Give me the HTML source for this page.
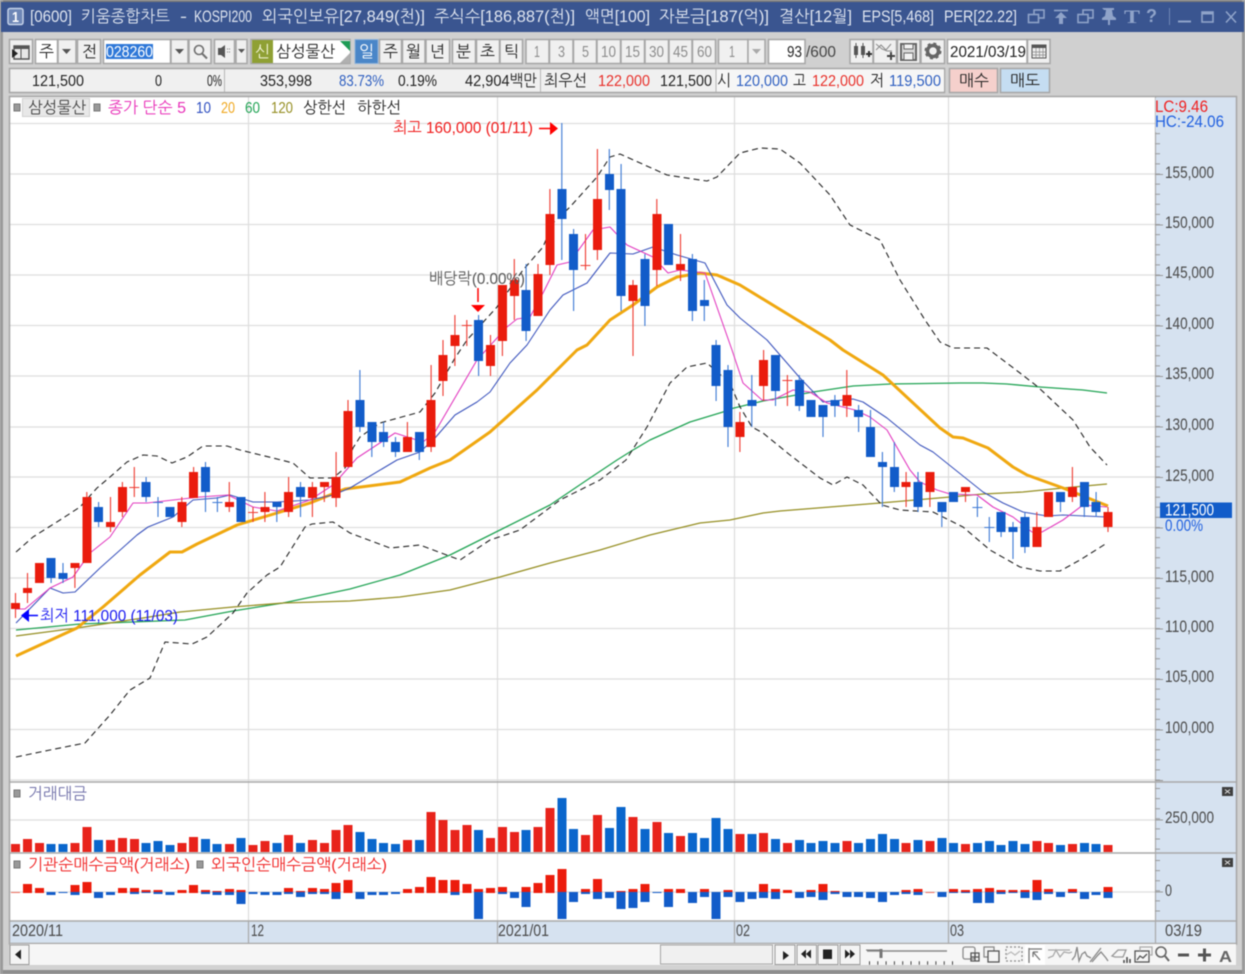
<!DOCTYPE html>
<html><head><meta charset="utf-8"><title>키움종합차트</title>
<style>
html,body{margin:0;padding:0;background:#d0d0d0;width:1245px;height:974px;overflow:hidden}
svg{display:block;filter:blur(.42px)}
text{font-family:"Liberation Sans Narrow","Liberation Sans","NanumGothic","Noto Sans CJK KR",sans-serif;font-size:16px;fill:#222;white-space:pre}
.t text{fill:#dfe5f0;font-size:16.5px}
.b{fill:#f0f0f0;stroke:#a6a6a6;stroke-width:1.5}
.w{fill:#fff;stroke:#a6a6a6;stroke-width:1.5}
.g text{fill:#8c8c8c}
.ax text{fill:#4a4a4a;font-size:16.5px}
</style></head><body>
<svg width="1245" height="974" viewBox="0 0 1245 974" xmlns="http://www.w3.org/2000/svg">
<rect width="1245" height="974" fill="#d0d0d0"/>
<rect x="0" y="0" width="1245" height="2" fill="#7d7d7d"/>
<rect x="0" y="966" width="1245" height="8" fill="#d2d2d2"/>
<rect x="0" y="970" width="1245" height="4" fill="#8e8e8e"/>
<rect x="0" y="0" width="3" height="974" fill="#9a9a9a"/>
<rect x="1242" y="0" width="3" height="974" fill="#9a9a9a"/>
<!-- title -->
<rect x="1" y="2" width="1243" height="30" fill="#3a5590"/>
<rect x="8" y="8.5" width="15" height="16" rx="2" fill="#6d86b6" stroke="#c4d2e8" stroke-width="1.5"/>
<text x="12" y="22" textLength="7" lengthAdjust="spacingAndGlyphs" style="fill:#fff;font-weight:bold;font-size:15px">1</text>
<g class="t">
<text x="30" y="22" textLength="42" lengthAdjust="spacingAndGlyphs">[0600]</text>
<text x="81" y="22" textLength="89" lengthAdjust="spacingAndGlyphs">키움종합차트</text>
<text x="180" y="22" textLength="7" lengthAdjust="spacingAndGlyphs">-</text>
<text x="194" y="22" textLength="58" lengthAdjust="spacingAndGlyphs">KOSPI200</text>
<text x="262" y="22" textLength="163" lengthAdjust="spacingAndGlyphs">외국인보유[27,849(천)]</text>
<text x="434" y="22" textLength="141" lengthAdjust="spacingAndGlyphs">주식수[186,887(천)]</text>
<text x="585" y="22" textLength="65" lengthAdjust="spacingAndGlyphs">액면[100]</text>
<text x="659" y="22" textLength="110" lengthAdjust="spacingAndGlyphs">자본금[187(억)]</text>
<text x="779" y="22" textLength="73" lengthAdjust="spacingAndGlyphs">결산[12월]</text>
<text x="862" y="22" textLength="72" lengthAdjust="spacingAndGlyphs">EPS[5,468]</text>
<text x="944" y="22" textLength="73" lengthAdjust="spacingAndGlyphs">PER[22.22]</text>
</g>
<g fill="none" stroke="#8fa3c9" stroke-width="1.6">
<rect x="1034" y="10" width="10" height="8"/><rect x="1028.5" y="14.5" width="10" height="8" fill="#3a5590"/>
<rect x="1083" y="10" width="10" height="8"/><rect x="1078" y="14.5" width="10" height="8" fill="#3a5590"/>
<path d="M1054 10.5h14"/>
<path d="M1178 21.5h13" stroke-width="2"/>
<rect x="1202" y="12" width="11" height="10"/><path d="M1202 13h11" stroke-width="3"/>
<path d="M1226 11.5l10 11M1236 11.5l-10 11" stroke="#8fa3c9"/>
<path d="M1169.5 8v17" stroke="#6f86b4" stroke-width="1"/>
</g>
<g fill="#8fa3c9">
<path d="M1061 12l6 6h-4v6h-4v-6h-4z"/>
<path d="M1103 9h12v2h-2l1 6 3 2v2h-6v5h-2v-5h-6v-2l3-2 1-6h-2z" transform="translate(-1,-1)"/>
</g>
<text x="1124" y="23" textLength="16" lengthAdjust="spacingAndGlyphs" style="fill:#8fa3c9;font-family:'Liberation Serif',serif;font-size:19px;font-weight:bold">T</text>
<text x="1146" y="22" textLength="11" lengthAdjust="spacingAndGlyphs" style="fill:#8fa3c9;font-size:18px;font-weight:bold">?</text>

<!-- toolbar 1 -->
<g>
<rect class="b" x="9.5" y="39.5" width="23" height="24"/>
<path d="M14 46h15v13H14z" fill="#e8e8e8" stroke="#555" stroke-width="1.4"/><path d="M14 46h15v3H14z" fill="#555"/><path d="M21 46v13" stroke="#555"/><path d="M12 49l6 4.5-6 4.5z" fill="#222"/>
<rect class="w" x="35.5" y="39.5" width="22" height="24"/>
<text x="39" y="57" textLength="15" lengthAdjust="spacingAndGlyphs" style="font-size:16px">주</text>
<rect class="b" x="58" y="39.5" width="18" height="24"/><path d="M62 49h9l-4.500 5z" fill="#555"/>
<rect class="b" x="77.500" y="39.5" width="23" height="24"/>
<text x="82" y="57" textLength="15" lengthAdjust="spacingAndGlyphs" style="font-size:16px">전</text>
<rect class="w" x="103.500" y="39.5" width="67" height="24"/>
<rect x="106" y="44" width="47" height="15" fill="#2f78d8"/>
<text x="106" y="57" textLength="47" lengthAdjust="spacingAndGlyphs" style="fill:#fff">028260</text>
<rect class="b" x="171" y="39.5" width="17" height="24"/><path d="M175 49h9l-4.500 5z" fill="#555"/>
<rect class="b" x="189" y="39.5" width="22" height="24"/>
<circle cx="199" cy="50" r="4.500" fill="none" stroke="#707070" stroke-width="1.6"/><path d="M202 53.500l5 5" stroke="#707070" stroke-width="2"/>
<rect class="b" x="214.500" y="39.5" width="20" height="24"/><path d="M218 48h3l4-3v13l-4-3h-3z" fill="#555"/><path d="M227 49h1M229 49h1M227 52h1M229 52h1" stroke="#777"/>
<rect class="b" x="236" y="39.5" width="11" height="24"/><path d="M238 49h7l-3.500 4z" fill="#555"/>
<rect class="b" x="251" y="39.5" width="99" height="24"/>
<rect x="252" y="40" width="21" height="23" fill="#8fa034"/>
<text x="255" y="57" textLength="15" lengthAdjust="spacingAndGlyphs" style="fill:#f2f4d8;font-size:16px">신</text>
<rect x="273" y="40.500" width="77" height="22.500" fill="#fff"/>
<text x="276" y="57" textLength="59" lengthAdjust="spacingAndGlyphs">삼성물산</text>
<path d="M340 41h10v10z" fill="#1d9c55"/><path d="M350 53v10h-10z" fill="#b0b0b0"/>
<rect x="355" y="39.5" width="23" height="24" fill="#4a86c8" stroke="#8fb2da"/>
<text x="359" y="57" textLength="15" lengthAdjust="spacingAndGlyphs" style="fill:#fff;font-size:16px">일</text>
</g>
<g>
<rect class="b" x="379.500" y="39.5" width="22" height="24"/><text x="383" y="57" textLength="15" lengthAdjust="spacingAndGlyphs" style="font-size:16px">주</text>
<rect class="b" x="402.500" y="39.5" width="22.500" height="24"/><text x="406" y="57" textLength="15" lengthAdjust="spacingAndGlyphs" style="font-size:16px">월</text>
<rect class="b" x="426" y="39.5" width="23.500" height="24"/><text x="430" y="57" textLength="15" lengthAdjust="spacingAndGlyphs" style="font-size:16px">년</text>
<rect class="b" x="452.500" y="39.5" width="23" height="24"/><text x="456" y="57" textLength="15" lengthAdjust="spacingAndGlyphs" style="font-size:16px">분</text>
<rect class="b" x="476.500" y="39.5" width="23" height="24"/><text x="480" y="57" textLength="15" lengthAdjust="spacingAndGlyphs" style="font-size:16px">초</text>
<rect class="b" x="500" y="39.5" width="22.500" height="24"/><text x="504" y="57" textLength="15" lengthAdjust="spacingAndGlyphs" style="font-size:16px">틱</text>
</g>
<g class="g">
<rect class="b" x="526" y="39.5" width="23" height="24"/><text x="534" y="57" textLength="6" lengthAdjust="spacingAndGlyphs">1</text>
<rect class="b" x="549.500" y="39.5" width="23.500" height="24"/><text x="558" y="57" textLength="7" lengthAdjust="spacingAndGlyphs">3</text>
<rect class="b" x="573.500" y="39.5" width="23" height="24"/><text x="582" y="57" textLength="7" lengthAdjust="spacingAndGlyphs">5</text>
<rect class="b" x="597" y="39.5" width="23.500" height="24"/><text x="601" y="57" textLength="15" lengthAdjust="spacingAndGlyphs">10</text>
<rect class="b" x="621" y="39.5" width="23.500" height="24"/><text x="625" y="57" textLength="15" lengthAdjust="spacingAndGlyphs">15</text>
<rect class="b" x="645" y="39.5" width="23.500" height="24"/><text x="649" y="57" textLength="15" lengthAdjust="spacingAndGlyphs">30</text>
<rect class="b" x="669" y="39.5" width="23" height="24"/><text x="673" y="57" textLength="15" lengthAdjust="spacingAndGlyphs">45</text>
<rect class="b" x="692.500" y="39.5" width="23" height="24"/><text x="697" y="57" textLength="15" lengthAdjust="spacingAndGlyphs">60</text>
<rect class="b" x="718.500" y="39.5" width="29.500" height="24"/><text x="729" y="57" textLength="6" lengthAdjust="spacingAndGlyphs">1</text>
<rect class="b" x="748" y="39.5" width="17" height="24"/><path d="M752 49h9l-4.500 5z" fill="#aaa"/>
</g>
<rect class="w" x="768.500" y="39.5" width="36.500" height="24"/>
<text x="787" y="57" textLength="15" lengthAdjust="spacingAndGlyphs">93</text>
<text x="806" y="57" textLength="30" lengthAdjust="spacingAndGlyphs" style="fill:#444">/600</text>
<rect class="b" x="850" y="39.5" width="23" height="24"/>
<path d="M854 46h4v9h-4zM861 46h4v9h-4z" fill="#555"/><path d="M856 43v15M863 43v15" stroke="#555"/><path d="M866 54h6M869 51v6" stroke="#333" stroke-width="2"/>
<rect class="b" x="873.500" y="39.5" width="23" height="24"/>
<path d="M876 50l5-5 5 5 5-6M876 44l6 5 5 2 5 0" fill="none" stroke="#8a8a8a"/><path d="M887 56h8M891 52v8" stroke="#444" stroke-width="2"/>
<rect class="b" x="897.500" y="39.5" width="22.500" height="24"/>
<path d="M901 44h15v16h-15z" fill="#d8d8d8" stroke="#666" stroke-width="2"/><path d="M904 44h9v5h-9zM904 53h9v7h-9z" fill="#f2f2f2" stroke="#666"/>
<rect class="b" x="921" y="39.5" width="23.500" height="24"/>
<circle cx="933" cy="51" r="5.500" fill="none" stroke="#666" stroke-width="3.500"/><circle cx="933" cy="51" r="7.500" fill="none" stroke="#666" stroke-width="2" stroke-dasharray="3 2.900"/>
<rect class="w" x="947.500" y="39.5" width="79.500" height="24"/>
<text x="950" y="57" textLength="76" lengthAdjust="spacingAndGlyphs">2021/03/19</text>
<rect class="b" x="1027.500" y="39.5" width="22.500" height="24"/>
<path d="M1032 45h14v13h-14z" fill="#eee" stroke="#555"/><path d="M1032 45h14v3h-14z" fill="#555"/><path d="M1032 52h14M1032 55h14M1036 48v10M1039.500 48v10M1043 48v10" stroke="#888" stroke-width=".7"/>

<!-- toolbar 2 -->
<rect class="b" x="9.500" y="68.500" width="935" height="24" style="fill:#f0f0f0"/>
<path d="M224.500 69v23M540.500 69v23M716 69v23" stroke="#b5b5b5"/>
<rect x="717" y="69.500" width="227" height="22" fill="#f6f6f6"/>
<text x="32" y="86" textLength="52" lengthAdjust="spacingAndGlyphs">121,500</text>
<text x="155" y="86" textLength="7" lengthAdjust="spacingAndGlyphs">0</text>
<text x="207" y="86" textLength="15" lengthAdjust="spacingAndGlyphs">0%</text>
<text x="260" y="86" textLength="52" lengthAdjust="spacingAndGlyphs">353,998</text>
<text x="339" y="86" textLength="45" lengthAdjust="spacingAndGlyphs" style="fill:#2f5fc0">83.73%</text>
<text x="398" y="86" textLength="39" lengthAdjust="spacingAndGlyphs">0.19%</text>
<text x="465" y="86" textLength="72" lengthAdjust="spacingAndGlyphs">42,904백만</text>
<text x="544" y="86" textLength="43" lengthAdjust="spacingAndGlyphs">최우선</text>
<text x="598" y="86" textLength="52" lengthAdjust="spacingAndGlyphs" style="fill:#e8302a">122,000</text>
<text x="660" y="86" textLength="52" lengthAdjust="spacingAndGlyphs">121,500</text>
<text x="717" y="86" textLength="14" lengthAdjust="spacingAndGlyphs">시</text>
<text x="736" y="86" textLength="52" lengthAdjust="spacingAndGlyphs" style="fill:#2f5fc0">120,000</text>
<text x="793" y="86" textLength="13" lengthAdjust="spacingAndGlyphs">고</text>
<text x="812" y="86" textLength="52" lengthAdjust="spacingAndGlyphs" style="fill:#e8302a">122,000</text>
<text x="870" y="86" textLength="14" lengthAdjust="spacingAndGlyphs">저</text>
<text x="889" y="86" textLength="52" lengthAdjust="spacingAndGlyphs" style="fill:#2f5fc0">119,500</text>
<rect x="949.500" y="68.500" width="48" height="24" fill="#f5d0cc" stroke="#a6a6a6" stroke-width="1.5"/>
<text x="959" y="86" textLength="30" lengthAdjust="spacingAndGlyphs">매수</text>
<rect x="1000.500" y="68.500" width="49" height="24" fill="#c5ddf2" stroke="#a6a6a6" stroke-width="1.5"/>
<text x="1010" y="86" textLength="30" lengthAdjust="spacingAndGlyphs">매도</text>

<!-- chart frame -->
<rect x="10" y="97" width="1226" height="847" fill="#fff"/>
<rect x="1155" y="97" width="81" height="824" fill="#d6e2f0"/>
<rect x="10" y="921" width="1226" height="22" fill="#d6e2f0"/>

<!-- grid -->
<g stroke="#dedede" stroke-width="1.3" fill="none">
<path d="M10 123.500H1155M10 174H1155M10 224.500H1155M10 275H1155M10 325.500H1155M10 376H1155M10 427H1155M10 477H1155M10 527.500H1155M10 578H1155M10 628.500H1155M10 679H1155M10 729.500H1155M10 780H1155"/>
<path d="M248.500 97V921M497.500 97V921M734.500 97V921M948.500 97V921"/>
<path d="M10 820H1155M10 892H1155"/>
</g>
<path d="M10 782H1236M10 853H1236M10 921H1236M10 943.500H1236" stroke="#a9a9a9" stroke-width="1.5"/>
<path d="M1155.500 97V943M248.500 921v22M497.500 921v22M734.500 921v22M948.500 921v22" stroke="#a9a9a9" stroke-width="1.200"/>
<rect x="9.500" y="96.500" width="1227" height="847.500" fill="none" stroke="#a6a6a6" stroke-width="1.5"/>

<!-- axis ticks -->
<g stroke="#9a9a9a" fill="none">
<path d="M1157.500 123V781" stroke-width="5" stroke-dasharray="1 9.100"/>
<path d="M1159 174V781" stroke-width="8" stroke-dasharray="1 49.500"/>
<path d="M1157.500 788V852" stroke-width="5" stroke-dasharray="1 9.100"/>
<path d="M1159 820h0" stroke-width="1"/><path d="M1155 820h8M1155 892h8"/>
<path d="M1157.500 860V920" stroke-width="5" stroke-dasharray="1 9.100"/>
</g>

<!-- MA lines & bands -->
<g fill="none" stroke-linejoin="round">
<polyline stroke="#22a455" stroke-width="1.300" points="16,630 80,624 185,620 233,611 283,603 350,589 400,575 450,555 500,530 550,505 590,478 617,460 633,450 650,440 690,422 723,412 730,409 763,401 813,392 853,386 890,384 960,383 983,383 1007,384 1040,387 1083,390 1107,393"/>
<polyline stroke="#968f24" stroke-width="1.300" points="16,636 77,628 143,618 180,612 233,607 283,603 350,601 400,597 450,590 500,577 550,563 600,550 650,535 700,523 730,520 763,513 780,511 830,507 880,503 950,497 983,494 1023,492 1063,488 1107,484"/>
<polyline stroke="#f0a810" stroke-width="3" points="16,656 77,628 103,607 140,575 170,552 182,552 197,544 237,525 277,513 310,503 345,489 400,482 430,468 450,460 490,432 537,390 577,350 587,345 610,320 633,305 657,287 677,277 700,273 717,275 740,285 830,340 843,350 883,375 940,428 953,437 963,438 988,448 1013,467 1027,475 1063,488 1108,506"/>
<polyline stroke="#3d55bd" stroke-width="1.100" points="16,623 50,588 63,593 75,592 100,568 137,535 148,527 173,517 193,500 217,498 230,495 253,502 277,502 310,500 333,495 350,488 397,460 420,452 435,438 455,415 477,402 490,392 510,363 527,345 550,310 563,295 587,283 610,253 633,254 653,247 677,255 705,263 727,305 740,318 767,340 800,378 823,402 853,399 863,402 887,418 920,445 933,452 983,492 1003,503 1023,512 1047,516 1063,515 1107,517"/>
<polyline stroke="#e23cc0" stroke-width="1.100" points="16,609 25,609 50,588 73,577 90,553 110,537 133,503 147,503 173,500 200,497 228,495 253,507 277,511 310,500 333,485 357,458 395,433 423,442 435,432 477,360 507,327 517,319 530,317 543,293 557,265 570,262 593,230 610,227 627,245 653,257 668,273 680,270 705,273 732,350 743,383 762,400 773,400 793,390 810,392 827,403 855,410 870,417 887,430 910,470 920,482 937,490 950,494 977,495 993,507 1013,517 1032,532 1042,532 1063,520 1083,505 1107,507"/>
<polyline stroke="#222" stroke-width="1.100" stroke-dasharray="6 4" points="16,552 33,537 60,520 80,507 97,488 110,477 127,462 143,455 157,456 172,463 187,457 203,446 227,446 240,450 273,458 293,463 310,478 333,478 345,468 353,448 360,437 380,423 420,412 435,393 455,358 467,340 497,307 523,270 543,247 553,223 570,207 597,177 610,157 620,154 667,175 693,179 707,181 717,177 740,153 760,148 780,149 800,163 830,195 850,225 880,240 900,280 925,320 940,342 953,348 987,348 1020,373 1038,387 1073,420 1090,447 1107,465"/>
<polyline stroke="#222" stroke-width="1.100" stroke-dasharray="6 4" points="16,757 50,750 85,743 110,715 130,690 150,678 165,642 192,644 207,637 233,613 247,593 267,575 280,567 305,527 312,524 333,522 350,533 390,548 420,545 460,560 490,540 520,530 560,500 600,480 626,460 647,427 670,383 687,367 707,363 723,377 730,383 740,407 752,427 763,433 790,455 820,478 833,485 847,477 863,485 882,505 900,510 933,512 963,527 990,550 1020,567 1040,571 1060,571 1080,560 1107,543"/>
</g>

<!-- candles wicks -->
<g fill="none" stroke-width="1.100">
<path stroke="#ee3a30" d="M15.500 593V618M27.500 573V603M74.900 563V588M86.800 492V563M110.500 497V532M122.400 482V517M134.300 467V497M181.800 497V527M193.600 467V498M229.300 482V512M253 507V522M264.900 492V522M288.600 477V517M312.400 482V517M324.300 482V502M336.100 452V507M348 400V467M407.400 422V452M431.100 365V452M443 340V396M454.900 315V366M466.800 320V346M490.500 335V376M502.400 285V356M514.300 259V320M538 264V316M549.900 189V275M585.500 234V270M597.400 149V260M633 280V356M656.800 199V286M680.500 234V281M739.900 412V452M763.600 350V401M787.400 375V406M846.800 370V417M906.100 472V507M929.900 472V507M965.500 487V502M1036.800 512V547M1072.400 467V502M1108 507V532"/>
<path stroke="#3b78d4" d="M51.100 558V583M63 563V583M98.600 502V527M146.100 477V502M158 497V517M205.500 462V512M217.400 497V512M276.800 502V522M300.500 482V517M359.900 370V432M371.800 422V457M383.600 422V447M395.500 437V457M419.300 432V460M478.600 315V376M526.100 264V341M561.800 123V260M573.600 229V311M609.300 149V210M621.100 164V311M644.900 254V326M692.400 254V321M704.300 280V321M716.100 340V401M728 365V447M751.800 375V427M775.500 355V406M799.300 375V411M823 405V437M834.900 395V417M858.600 405V432M870.500 410V457M882.400 452V507M894.300 442V492M918 472V512M941.800 502V527M977.400 497V517M989.300 517V542M1001.100 512V537M1013 522V559M1024.900 512V553M1060.500 492V512M1084.300 482V517M1096.100 492V517"/>
<path stroke="#ee3a30" d="M129.300 487.500h10M248 512.500h10M461.800 325.500h10M580.500 265.500h10M782.400 380.500h10"/>
<path stroke="#3b78d4" d="M153 502.500h10M212.400 502.500h10M972.400 507.500h10M984.300 527.500h10"/>
</g>
<!-- candle bodies -->
<path fill="#ea1c0d" d="M11 603h9v6h-9zM23 588h9v5h-9zM35 563h9v20h-9zM70.500 563h9v5h-9zM82.500 497h9v66h-9zM106 522h9v5h-9zM118 487h9v25h-9zM177.500 502h9v20h-9zM189 472h9v26h-9zM225 502h9v5h-9zM260.500 507h9v5h-9zM284 492h9v20h-9zM308 487h9v11h-9zM320 482h9v5h-9zM331.500 477h9v21h-9zM343.500 411h9v56h-9zM403 437h9v15h-9zM426.500 400h9v47h-9zM438.500 355h9v26h-9zM450.500 335h9v11h-9zM486 345h9v21h-9zM498 285h9v56h-9zM510 280h9v16h-9zM533.500 274h9v42h-9zM545.500 214h9v51h-9zM593 199h9v51h-9zM628.500 285h9v16h-9zM652.500 214h9v56h-9zM676 264h9v6h-9zM735.500 422h9v15h-9zM759 360h9v26h-9zM842.500 395h9v11h-9zM901.500 482h9v5h-9zM925.500 472h9v20h-9zM961 487h9v5h-9zM1032.500 527h9v20h-9zM1044 492h9v25h-9zM1068 487h9v10h-9zM1103.500 512h9v15h-9z"/>
<path fill="#125cc9" d="M46.500 558h9v20h-9zM58.500 573h9v6h-9zM94 507h9v15h-9zM141.500 482h9v15h-9zM165.500 507h9v10h-9zM201 467h9v25h-9zM236.500 497h9v25h-9zM272.500 502h9v5h-9zM296 487h9v10h-9zM355.500 400h9v27h-9zM367.500 422h9v20h-9zM379 432h9v10h-9zM391 442h9v10h-9zM415 432h9v20h-9zM474 320h9v41h-9zM521.500 290h9v41h-9zM557.500 189h9v30h-9zM569 234h9v36h-9zM605 174h9v16h-9zM616.500 189h9v107h-9zM640.500 259h9v47h-9zM664 224h9v41h-9zM688 259h9v52h-9zM700 300h9v6h-9zM711.500 345h9v41h-9zM723.500 370h9v57h-9zM747.500 400h9v6h-9zM771 355h9v36h-9zM795 380h9v26h-9zM806.500 400h9v17h-9zM818.500 405h9v12h-9zM830.500 400h9v6h-9zM854 410h9v7h-9zM866 427h9v30h-9zM878 462h9v5h-9zM890 467h9v20h-9zM913.500 482h9v25h-9zM937.500 502h9v10h-9zM949 492h9v10h-9zM996.500 512h9v20h-9zM1008.500 527h9v5h-9zM1020.500 517h9v30h-9zM1056 492h9v10h-9zM1080 482h9v25h-9zM1091.500 502h9v10h-9z"/>

<!-- volume bars -->
<path fill="#e8231b" d="M11 844h9v8h-9zM23 839h9v13h-9zM35 843h9v9h-9zM70.500 843h9v9h-9zM82.500 827h9v25h-9zM106 840h9v12h-9zM118 838h9v14h-9zM130 839h9v13h-9zM177.500 843h9v9h-9zM189 837h9v15h-9zM225 844h9v8h-9zM248.500 845h9v7h-9zM260.500 841h9v11h-9zM284 835h9v17h-9zM308 840h9v12h-9zM320 843h9v9h-9zM331.500 830h9v22h-9zM343.500 825h9v27h-9zM403 840h9v12h-9zM426.500 812h9v40h-9zM438.500 820h9v32h-9zM450.500 830h9v22h-9zM462.500 825h9v27h-9zM486 838h9v14h-9zM498 827h9v25h-9zM510 832h9v20h-9zM533.500 827h9v25h-9zM545.500 808h9v44h-9zM581 835h9v17h-9zM593 815h9v37h-9zM628.500 817h9v35h-9zM652.500 822h9v30h-9zM676 836h9v16h-9zM735.500 834h9v18h-9zM759 833h9v19h-9zM783 843h9v9h-9zM842.500 841h9v11h-9zM901.500 843h9v9h-9zM925.500 841h9v11h-9zM961 844h9v8h-9zM1032.500 841h9v11h-9zM1044 843h9v9h-9zM1068 844h9v8h-9zM1103.500 845h9v7h-9z"/>
<path fill="#0a66cc" d="M46.500 844h9v8h-9zM58.500 844h9v8h-9zM94 840h9v12h-9zM141.500 843h9v9h-9zM153.500 841h9v11h-9zM165.500 845h9v7h-9zM201 839h9v13h-9zM212.500 844h9v8h-9zM236.500 838h9v14h-9zM272.500 843h9v9h-9zM296 843h9v9h-9zM355.500 832h9v20h-9zM367.500 839h9v13h-9zM379 843h9v9h-9zM391 844h9v8h-9zM415 840h9v12h-9zM474 830h9v22h-9zM521.500 830h9v22h-9zM557.500 798h9v54h-9zM569 829h9v23h-9zM605 828h9v24h-9zM616.500 807h9v45h-9zM640.500 829h9v23h-9zM664 833h9v19h-9zM688 833h9v19h-9zM700 838h9v14h-9zM711.500 818h9v34h-9zM723.500 829h9v23h-9zM747.500 834h9v18h-9zM771 839h9v13h-9zM795 840h9v12h-9zM806.500 843h9v9h-9zM818.500 841h9v11h-9zM830.500 843h9v9h-9zM854 843h9v9h-9zM866 839h9v13h-9zM878 834h9v18h-9zM890 839h9v13h-9zM913.500 840h9v12h-9zM937.500 838h9v14h-9zM949 843h9v9h-9zM973 843h9v9h-9zM985 841h9v11h-9zM996.500 845h9v7h-9zM1008.500 841h9v11h-9zM1020.500 844h9v8h-9zM1056 845h9v7h-9zM1080 843h9v9h-9zM1091.500 844h9v8h-9z"/>

<!-- investor bars -->
<path fill="#f07060" d="M11 892h9v1h-9zM925.500 892h9v1h-9z"/>
<path fill="#ec1c0c" d="M23 884h9v9h-9zM35 888h9v5h-9zM46.500 892h9v1h-9zM70.500 885h9v8h-9zM82.500 882h9v11h-9zM94 892h9v1h-9zM118 888h9v5h-9zM130 888h9v5h-9zM141.500 890h9v3h-9zM153.500 890h9v3h-9zM177.500 890h9v3h-9zM189 885h9v8h-9zM201 890h9v3h-9zM212.500 891h9v2h-9zM225 889h9v4h-9zM236.500 890h9v3h-9zM284 888h9v5h-9zM296 891h9v2h-9zM308 888h9v5h-9zM320 889h9v4h-9zM331.500 883h9v10h-9zM343.500 880h9v13h-9zM403 889h9v4h-9zM415 887h9v6h-9zM426.500 877h9v16h-9zM438.500 880h9v13h-9zM450.500 880h9v13h-9zM462.500 884h9v9h-9zM474 889h9v4h-9zM486 888h9v5h-9zM498 887h9v6h-9zM521.500 887h9v6h-9zM533.500 883h9v10h-9zM545.500 875h9v18h-9zM557.500 869h9v24h-9zM581 889h9v4h-9zM593 879h9v14h-9zM616.500 891h9v2h-9zM628.500 889h9v4h-9zM640.500 884h9v9h-9zM664 889h9v4h-9zM676 889h9v4h-9zM700 889h9v4h-9zM723.500 890h9v3h-9zM759 884h9v9h-9zM771 889h9v4h-9zM783 890h9v3h-9zM806.500 890h9v3h-9zM818.500 884h9v9h-9zM830.500 891h9v2h-9zM901.500 890h9v3h-9zM913.500 889h9v4h-9zM949 889h9v4h-9zM961 890h9v3h-9zM973 889h9v4h-9zM985 888h9v5h-9zM996.500 890h9v3h-9zM1008.500 890h9v3h-9zM1020.500 890h9v3h-9zM1032.500 880h9v13h-9zM1044 889h9v4h-9zM1068 889h9v4h-9zM1103.500 887h9v6h-9z"/>
<path fill="#125cc9" d="M46.500 892h9v3h-9zM58.500 892h9v1h-9zM70.500 892h9v3h-9zM94 892h9v6h-9zM106 892h9v3h-9zM130 892h9v2h-9zM141.500 892h9v1h-9zM153.500 892h9v2h-9zM165.500 892h9v3h-9zM201 892h9v2h-9zM212.500 892h9v3h-9zM225 892h9v3h-9zM236.500 892h9v12h-9zM248.500 892h9v2h-9zM260.500 892h9v3h-9zM272.500 892h9v3h-9zM284 892h9v2h-9zM296 892h9v5h-9zM308 892h9v2h-9zM320 892h9v2h-9zM331.500 892h9v7h-9zM355.500 892h9v7h-9zM367.500 892h9v3h-9zM379 892h9v3h-9zM391 892h9v2h-9zM450.500 892h9v3h-9zM474 892h9v27h-9zM498 892h9v2h-9zM510 892h9v6h-9zM521.500 892h9v15h-9zM557.500 892h9v27h-9zM569 892h9v10h-9zM581 892h9v2h-9zM593 892h9v7h-9zM605 892h9v6h-9zM616.500 892h9v17h-9zM628.500 892h9v16h-9zM640.500 892h9v10h-9zM652.500 892h9v1h-9zM664 892h9v15h-9zM688 892h9v11h-9zM700 892h9v5h-9zM711.500 892h9v27h-9zM723.500 892h9v5h-9zM735.500 892h9v10h-9zM747.500 892h9v7h-9zM759 892h9v6h-9zM771 892h9v7h-9zM795 892h9v6h-9zM806.500 892h9v5h-9zM818.500 892h9v8h-9zM830.500 892h9v2h-9zM842.500 892h9v5h-9zM854 892h9v5h-9zM866 892h9v6h-9zM878 892h9v10h-9zM890 892h9v3h-9zM901.500 892h9v2h-9zM913.500 892h9v3h-9zM937.500 892h9v5h-9zM949 892h9v1h-9zM961 892h9v1h-9zM973 892h9v11h-9zM985 892h9v11h-9zM996.500 892h9v2h-9zM1008.500 892h9v1h-9zM1020.500 892h9v6h-9zM1032.500 892h9v8h-9zM1044 892h9v2h-9zM1056 892h9v5h-9zM1068 892h9v1h-9zM1080 892h9v7h-9zM1091.500 892h9v3h-9zM1103.500 892h9v6h-9z"/>

<!-- legend -->
<rect x="14" y="104" width="6" height="7" fill="#999" stroke="#777"/>
<rect x="22.500" y="98.500" width="67" height="18" fill="#e8e8e8" stroke="#d0d0d0"/>
<text x="28" y="113" textLength="58" lengthAdjust="spacingAndGlyphs" style="fill:#444">삼성물산</text>
<rect x="94" y="104" width="6" height="7" fill="#999" stroke="#777"/>
<text x="108" y="113" textLength="78" lengthAdjust="spacingAndGlyphs" style="fill:#e830b8">종가 단순 5</text>
<text x="196" y="113" textLength="15" lengthAdjust="spacingAndGlyphs" style="fill:#2f4fc0">10</text>
<text x="221" y="113" textLength="14" lengthAdjust="spacingAndGlyphs" style="fill:#f0a820">20</text>
<text x="245" y="113" textLength="15" lengthAdjust="spacingAndGlyphs" style="fill:#22a455">60</text>
<text x="271" y="113" textLength="22" lengthAdjust="spacingAndGlyphs" style="fill:#968f24">120</text>
<text x="303" y="113" textLength="43" lengthAdjust="spacingAndGlyphs">상한선</text>
<text x="357" y="113" textLength="44" lengthAdjust="spacingAndGlyphs">하한선</text>

<!-- annotations -->
<text x="393" y="133" textLength="140" lengthAdjust="spacingAndGlyphs" style="fill:#f01818">최고 160,000 (01/11)</text>
<path d="M539 128.500h12" stroke="#f00" stroke-width="1.500"/><path d="M550 122l8 6.500-8 6.500z" fill="#f00"/>
<text x="429" y="284" textLength="96" lengthAdjust="spacingAndGlyphs" style="fill:#555">배당락(0.00%)</text>
<path d="M478 288v14" stroke="#f00" stroke-width="1.500"/><path d="M471 305h14l-7 7z" fill="#f00"/>
<text x="40" y="621" textLength="138" lengthAdjust="spacingAndGlyphs" style="fill:#1818f0">최저 111,000 (11/03)</text>
<path d="M26 615.500h12" stroke="#00f" stroke-width="1.500"/><path d="M21 615.500l8-6.500v13z" fill="#00f"/>

<!-- sub pane labels -->
<rect x="14" y="790" width="6" height="7" fill="#999" stroke="#777"/>
<text x="28" y="799" textLength="59" lengthAdjust="spacingAndGlyphs" style="fill:#6f6fa8">거래대금</text>
<rect x="14" y="861" width="6" height="7" fill="#999" stroke="#777"/>
<text x="28" y="870" textLength="162" lengthAdjust="spacingAndGlyphs" style="fill:#f02020">기관순매수금액(거래소)</text>
<rect x="197" y="861" width="6" height="7" fill="#999" stroke="#777"/>
<text x="211" y="870" textLength="176" lengthAdjust="spacingAndGlyphs" style="fill:#f02020">외국인순매수금액(거래소)</text>
<g>
<rect x="1222" y="787" width="11" height="9" fill="#3f3f3f"/><path d="M1225 789.500l5 4M1230 789.500l-5 4" stroke="#ddd"/>
<rect x="1222" y="858" width="11" height="9" fill="#3f3f3f"/><path d="M1225 860.500l5 4M1230 860.500l-5 4" stroke="#ddd"/>
</g>

<!-- axis labels -->
<rect x="1155.500" y="98" width="79" height="34" fill="#d6e2f0"/>
<text x="1155" y="112" textLength="53" lengthAdjust="spacingAndGlyphs" style="fill:#f02020;font-size:17px">LC:9.46</text>
<text x="1155" y="127" textLength="69" lengthAdjust="spacingAndGlyphs" style="fill:#2060e0;font-size:17px">HC:-24.06</text>
<g class="ax">
<text x="1165" y="178" textLength="49" lengthAdjust="spacingAndGlyphs">155,000</text>
<text x="1165" y="228" textLength="49" lengthAdjust="spacingAndGlyphs">150,000</text>
<text x="1165" y="278" textLength="49" lengthAdjust="spacingAndGlyphs">145,000</text>
<text x="1165" y="329" textLength="49" lengthAdjust="spacingAndGlyphs">140,000</text>
<text x="1165" y="379" textLength="49" lengthAdjust="spacingAndGlyphs">135,000</text>
<text x="1165" y="430" textLength="49" lengthAdjust="spacingAndGlyphs">130,000</text>
<text x="1165" y="481" textLength="49" lengthAdjust="spacingAndGlyphs">125,000</text>
<text x="1165" y="582" textLength="49" lengthAdjust="spacingAndGlyphs">115,000</text>
<text x="1165" y="632" textLength="49" lengthAdjust="spacingAndGlyphs">110,000</text>
<text x="1165" y="682" textLength="49" lengthAdjust="spacingAndGlyphs">105,000</text>
<text x="1165" y="733" textLength="49" lengthAdjust="spacingAndGlyphs">100,000</text>
<text x="1165" y="823" textLength="49" lengthAdjust="spacingAndGlyphs">250,000</text>
<text x="1165" y="896" textLength="7" lengthAdjust="spacingAndGlyphs">0</text>
<text x="1165" y="936" textLength="37" lengthAdjust="spacingAndGlyphs">03/19</text>
<text x="12" y="936" textLength="51" lengthAdjust="spacingAndGlyphs">2020/11</text>
<text x="251" y="936" textLength="13" lengthAdjust="spacingAndGlyphs">12</text>
<text x="498" y="936" textLength="51" lengthAdjust="spacingAndGlyphs">2021/01</text>
<text x="736" y="936" textLength="14" lengthAdjust="spacingAndGlyphs">02</text>
<text x="950" y="936" textLength="14" lengthAdjust="spacingAndGlyphs">03</text>
</g>
<rect x="1160" y="502.500" width="72" height="15.500" fill="#125cc9"/>
<text x="1165" y="515.500" textLength="49" lengthAdjust="spacingAndGlyphs" style="fill:#fff;font-size:16.5px">121,500</text>
<text x="1165" y="531" textLength="38" lengthAdjust="spacingAndGlyphs" style="fill:#2060e0;font-size:16.5px">0.00%</text>

<!-- bottom row -->
<rect x="10" y="944" width="1226" height="21" fill="#f6f6f6"/>
<rect x="10" y="945" width="19" height="19.500" fill="#f4f4f4" stroke="#9a9a9a"/><path d="M15 954.500l6-5v10z" fill="#222"/>
<rect x="660.500" y="945" width="112" height="19" fill="#f0f0f0" stroke="#a6a6a6"/>
<rect x="775" y="945" width="20" height="19.500" fill="#f4f4f4" stroke="#9a9a9a"/><path d="M783 951l6 4.500-6 4.500z" fill="#222"/>
<rect x="797" y="945" width="19.500" height="19.500" fill="#f4f4f4" stroke="#9a9a9a"/><path d="M801 954l5-4.500v9zM806 954l5-4.500v9z" fill="#222"/>
<rect x="818" y="945" width="20" height="19.500" fill="#f4f4f4" stroke="#9a9a9a"/><rect x="823" y="949.500" width="9" height="9.500" fill="#222"/>
<rect x="840" y="945" width="20" height="19.500" fill="#f4f4f4" stroke="#9a9a9a"/><path d="M845 949.500l5 4.500-5 4.500zM850 949.500l5 4.500-5 4.500z" fill="#222"/>
<path d="M867 951h80" stroke="#8a8a8a" stroke-width="1.500"/><path d="M866 950h14" stroke="#777" stroke-width="1"/>
<path d="M881 949v9" stroke="#777" stroke-width="3"/>
<path d="M869 963h84" stroke="#444" stroke-width="3.500" stroke-dasharray="1 7.300"/>
<!-- tool icons -->
<g fill="none" stroke="#8a8a8a" stroke-width="1.300">
<rect x="963" y="947" width="12" height="12" rx="2"/>
<path d="M971 953h8v8h-8zM971 957h8M975 953v8" stroke="#555"/>
<rect x="984" y="947" width="10" height="10"/><rect x="988" y="951" width="11" height="11" stroke="#555" fill="#f6f6f6"/>
<rect x="1006" y="947" width="16" height="14" stroke-dasharray="2 2"/><path d="M1006 955l5-3 4 3 5-4" stroke="#bbb"/>
</g>
<rect x="1025" y="945" width="20" height="20" fill="#fff"/>
<g fill="none" stroke="#777" stroke-width="1.300">
<path d="M1029 948v15M1029 949h13M1033 952l7 8M1033 952h5M1033 952v5"/>
<path d="M1048 958l5-2 3-6 4 7 4-5 5 1 3-1M1048 950h22" stroke="#aaa"/>
<path d="M1072 960l3-4 2-9 2 14 3-7 3-2 2 4 4 2" stroke="#888"/>
<path d="M1090 962l11-14 M1092 962l6-7 3-3 5 6 2 3" stroke="#888"/>
<path d="M1112 956l6-6h8l-3 7h-8z" stroke="#999"/><path d="M1124 963v-3M1127 963v-6M1130 963v-4" stroke="#444" stroke-width="1.500"/>
<rect x="1135" y="951" width="14" height="11" stroke="#555"/><path d="M1137 960l3-4 3 2 4-4" stroke="#555"/><path d="M1140 951v-4h12v8h-3" stroke="#aaa"/>
<circle cx="1161" cy="952" r="5" stroke="#666" stroke-width="1.600"/><path d="M1165 956l4 5" stroke="#666" stroke-width="2"/>
<path d="M1178 955h11" stroke="#555" stroke-width="3"/>
<path d="M1198 955h13M1204.500 948.500v13" stroke="#555" stroke-width="3"/>
</g>
<text x="1219" y="962" textLength="13" lengthAdjust="spacingAndGlyphs" style="fill:#666;font-weight:bold;font-size:16px">A</text>
</svg>
</body></html>
